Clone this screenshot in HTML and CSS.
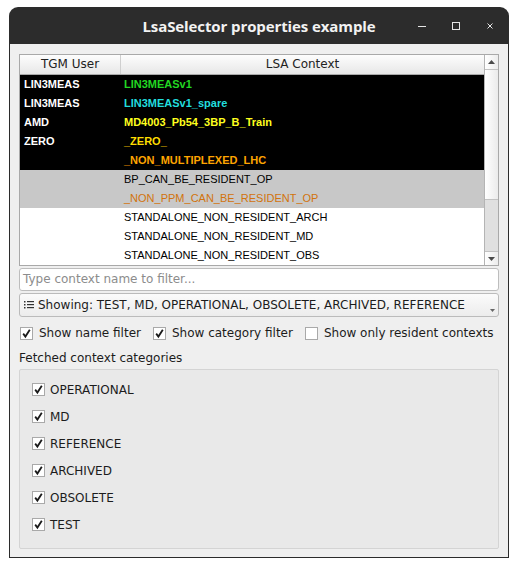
FILE: index.html
```html
<!DOCTYPE html>
<html>
<head>
<meta charset="utf-8">
<link rel="stylesheet" href="styles.css">
</head>
<body>
<div class="window">
  <div class="titlebar">
    <div class="spacer"></div>
    <div class="title">LsaSelector properties example</div>
    <div class="controls">
      <div class="wbtn"><svg width="10" height="10" viewBox="0 0 10 10"><path d="M1 5.5H9" stroke="#e6e6e6" stroke-width="1"/></svg></div>
      <div class="wbtn"><svg width="10" height="10" viewBox="0 0 10 10"><rect x="1.5" y="1.5" width="7" height="7" fill="none" stroke="#e6e6e6" stroke-width="1"/></svg></div>
      <div class="wbtn"><svg width="10" height="10" viewBox="0 0 10 10"><path d="M2.5 2.5L7.5 7.5M7.5 2.5L2.5 7.5" stroke="#e6e6e6" stroke-width="1"/></svg></div>
    </div>
  </div>
  <div class="body">
    <div class="table">
      <div class="grid">
        <div class="thead">
          <div class="th th1">TGM User</div>
          <div class="th">LSA Context</div>
        </div>
        <div class="row dark"><div class="c1">LIN3MEAS</div><div class="c2 green">LIN3MEASv1</div></div>
        <div class="row dark"><div class="c1">LIN3MEAS</div><div class="c2 cyan">LIN3MEASv1_spare</div></div>
        <div class="row dark"><div class="c1">AMD</div><div class="c2 yellow">MD4003_Pb54_3BP_B_Train</div></div>
        <div class="row dark"><div class="c1">ZERO</div><div class="c2 gold">_ZERO_</div></div>
        <div class="row dark"><div class="c1"></div><div class="c2 orange">_NON_MULTIPLEXED_LHC</div></div>
        <div class="row grey"><div class="c1"></div><div class="c2">BP_CAN_BE_RESIDENT_OP</div></div>
        <div class="row grey"><div class="c1"></div><div class="c2 dorange">_NON_PPM_CAN_BE_RESIDENT_OP</div></div>
        <div class="row"><div class="c1"></div><div class="c2">STANDALONE_NON_RESIDENT_ARCH</div></div>
        <div class="row"><div class="c1"></div><div class="c2">STANDALONE_NON_RESIDENT_MD</div></div>
        <div class="row"><div class="c1"></div><div class="c2">STANDALONE_NON_RESIDENT_OBS</div></div>
      </div>
      <div class="scrollbar">
        <div class="sbtn up"><svg width="7" height="4" viewBox="0 0 7 4"><path d="M0 4L3.5 0L7 4Z" fill="#4a4a4a"/></svg></div>
        <div class="track"></div>
        <div class="handle"></div>
        <div class="sbtn down"><svg width="7" height="4" viewBox="0 0 7 4"><path d="M0 0L3.5 4L7 0Z" fill="#4a4a4a"/></svg></div>
      </div>
    </div>
    <div class="filter">Type context name to filter...</div>
    <div class="combo">
      <svg class="listicon" width="10" height="8" viewBox="0 0 10 8"><rect x="0" y="0" width="1.5" height="1.5" fill="#333"/><rect x="0" y="3" width="1.5" height="1.5" fill="#333"/><rect x="0" y="6" width="1.5" height="1.5" fill="#333"/><rect x="3" y="0" width="7" height="1.2" fill="#333"/><rect x="3" y="3" width="7" height="1.2" fill="#333"/><rect x="3" y="6" width="7" height="1.2" fill="#333"/></svg>
      <span class="ctext">Showing: TEST, MD, OPERATIONAL, OBSOLETE, ARCHIVED, REFERENCE</span>
      <svg class="carrow" width="5" height="3" viewBox="0 0 5 3"><path d="M0 0L2.5 3L5 0Z" fill="#666"/></svg>
    </div>
    <div class="checks">
      <label class="chk"><span class="box on"><svg width="11" height="11" viewBox="0 0 11 11"><path d="M2.2 5.6L4.4 8.6L8.8 1.8" fill="none" stroke="#1a1a1a" stroke-width="1.8"/></svg></span>Show name filter</label>
      <label class="chk"><span class="box on"><svg width="11" height="11" viewBox="0 0 11 11"><path d="M2.2 5.6L4.4 8.6L8.8 1.8" fill="none" stroke="#1a1a1a" stroke-width="1.8"/></svg></span>Show category filter</label>
      <label class="chk"><span class="box"></span>Show only resident contexts</label>
    </div>
    <div class="label">Fetched context categories</div>
    <div class="group">
      <label class="chk item"><span class="box on"><svg width="11" height="11" viewBox="0 0 11 11"><path d="M2.2 5.6L4.4 8.6L8.8 1.8" fill="none" stroke="#1a1a1a" stroke-width="1.8"/></svg></span>OPERATIONAL</label>
      <label class="chk item"><span class="box on"><svg width="11" height="11" viewBox="0 0 11 11"><path d="M2.2 5.6L4.4 8.6L8.8 1.8" fill="none" stroke="#1a1a1a" stroke-width="1.8"/></svg></span>MD</label>
      <label class="chk item"><span class="box on"><svg width="11" height="11" viewBox="0 0 11 11"><path d="M2.2 5.6L4.4 8.6L8.8 1.8" fill="none" stroke="#1a1a1a" stroke-width="1.8"/></svg></span>REFERENCE</label>
      <label class="chk item"><span class="box on"><svg width="11" height="11" viewBox="0 0 11 11"><path d="M2.2 5.6L4.4 8.6L8.8 1.8" fill="none" stroke="#1a1a1a" stroke-width="1.8"/></svg></span>ARCHIVED</label>
      <label class="chk item"><span class="box on"><svg width="11" height="11" viewBox="0 0 11 11"><path d="M2.2 5.6L4.4 8.6L8.8 1.8" fill="none" stroke="#1a1a1a" stroke-width="1.8"/></svg></span>OBSOLETE</label>
      <label class="chk item"><span class="box on"><svg width="11" height="11" viewBox="0 0 11 11"><path d="M2.2 5.6L4.4 8.6L8.8 1.8" fill="none" stroke="#1a1a1a" stroke-width="1.8"/></svg></span>TEST</label>
    </div>
  </div>
</div>
</body>
</html>
```
FILE: styles.css
```css
* { box-sizing: border-box; }
html, body { margin: 0; padding: 0; background: #ffffff; }
body { font-family: "DejaVu Sans", sans-serif; font-size: 12px; color: #1c1c1c; }

.window { margin: 7px 0 0 9px; width: 500px; }

.titlebar {
  height: 37px;
  background: #2c2c2c;
  border-radius: 9px 9px 0 0;
  display: grid;
  grid-template-columns: 1fr auto 1fr;
  align-items: center;
}
.title {
  color: #f2f2f2;
  font-family: "Open Sans", sans-serif;
  font-weight: 700;
  font-size: 15px;
  letter-spacing: -0.1px;
  white-space: nowrap;
}
.controls { justify-self: end; display: flex; padding-right: 2px; height: 37px; }
.wbtn { width: 34px; height: 37px; display: flex; align-items: center; justify-content: center; }

.body {
  background: #efefef;
  border: 1px solid #2b2b2b;
  border-top: 0;
  padding: 10px 9px 8px;
}

.table {
  display: flex;
  border: 1px solid #a9a9a9;
  background: #fff;
}
.grid { flex: 1; }
.thead {
  display: grid;
  grid-template-columns: 101px 1fr;
  height: 20px;
  background: linear-gradient(#fdfdfd, #e7e7e7);
  border-bottom: 1px solid #a9a9a9;
}
.th { text-align: center; line-height: 19px; color: #222; }
.th1 { border-right: 1px solid #cfcfcf; }

.row {
  display: grid;
  grid-template-columns: 101px 1fr;
  height: 19px;
  line-height: 19px;
  font-family: "Liberation Sans", Arial, sans-serif;
  font-size: 11px;
  color: #000;
  white-space: nowrap;
}
.row .c1 { padding-left: 4px; }
.row .c2 { padding-left: 3px; }
.row.dark { background: #000; color: #fff; font-weight: 700; }
.row.grey { background: #c8c8c8; }
.green { color: #22d822; }
.cyan { color: #22dede; }
.yellow { color: #ffff1e; }
.gold { color: #ffdc00; }
.orange { color: #ffa500; }
.dorange { color: #d2730c; }

.scrollbar {
  width: 14px;
  border-left: 1px solid #b4b4b4;
  display: flex;
  flex-direction: column;
}
.sbtn {
  height: 15px;
  display: flex;
  align-items: center;
  justify-content: center;
  background: linear-gradient(90deg, #ffffff, #ececec);
}
.sbtn.up { border-bottom: 1px solid #c2c2c2; }
.sbtn.down { height: 14px; border-top: 1px solid #c2c2c2; }
.track { flex: 1; background: linear-gradient(90deg, #ffffff, #ebebeb); }
.handle { height: 52px; background: #e0e0e0; border-top: 1px solid #c2c2c2; }

.filter {
  margin-top: 2px;
  height: 23px;
  background: #fff;
  border: 1px solid #bdbdbd;
  border-radius: 3px;
  padding-left: 3px;
  line-height: 21px;
  color: #8c8c8c;
}

.combo {
  margin-top: 2px;
  height: 24px;
  border: 1px solid #bbbbbb;
  border-radius: 3px;
  background: linear-gradient(#fbfbfb, #ececec);
  display: flex;
  align-items: center;
  padding-left: 4px;
  color: #1c1c1c;
}
.listicon { margin-right: 4px; flex: none; }
.ctext { flex: 1; white-space: nowrap; }
.carrow { align-self: flex-end; margin: 0 3px 4px 0; }

.checks {
  margin-top: 7px;
  display: flex;
  gap: 12px;
  height: 18px;
  align-items: center;
  padding-left: 1px;
}
.chk { display: flex; align-items: center; white-space: nowrap; }
.box {
  width: 13px;
  height: 13px;
  border: 1px solid #a9a9a9;
  background: #fff;
  margin-right: 6px;
  display: flex;
  align-items: center;
  justify-content: center;
  flex: none;
}

.label { margin-top: 8px; height: 16px; line-height: 16px; }

.group {
  margin-top: 3px;
  height: 180px;
  background: #e9e9e9;
  border: 1px solid #d4d4d4;
  border-radius: 2px;
  padding: 6px 12px 10px;
}
.item { height: 27px; }
.item .box { margin-right: 5px; }
```
